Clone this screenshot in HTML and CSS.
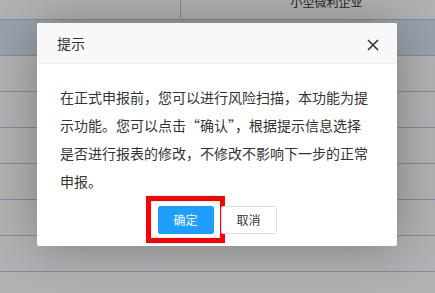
FILE: index.html
```html
<!doctype html>
<html lang="zh-CN">
<head>
    <meta charset="UTF-8">
    <title>提示</title>
    <link rel="stylesheet" href="styles.css">
</head>
<body>
    <div class="table">
        <div class="row">
            <div class="cell cell-first"></div>
            <div class="cell cell-type">小型微利企业</div>
        </div>
        <div class="row row-hover"></div>
        <div class="row"></div>
        <div class="row"></div>
        <div class="row"></div>
        <div class="row"></div>
        <div class="row"></div>
        <div class="row"></div>
    </div>

    <div class="shade"></div>

    <div class="layer">
        <div class="layer-title">
            提示
            <span class="layer-close">
                <svg width="12" height="12" viewBox="0 0 12 12">
                    <path d="M1 1 L11 11 M11 1 L1 11" stroke="#333" stroke-width="1.6" fill="none"/>
                </svg>
            </span>
        </div>
        <div class="layer-content">
            在正式申报前，您可以进行风险扫描，本功能为提示功能。您可以点击“确认”，根据提示信息选择是否进行报表的修改，不修改不影响下一步的正常申报。
        </div>
        <div class="layer-btn">
            <a class="btn btn-ok">确定<span class="mark"></span></a>
            <a class="btn btn-cancel">取消</a>
        </div>
    </div>
</body>
</html>
```

FILE: styles.css
```css
* { margin: 0; padding: 0; box-sizing: border-box; }
body {
    width: 435px;
    height: 293px;
    overflow: hidden;
    position: relative;
    background: #fff;
    font-family: "Noto Sans CJK SC", "Liberation Sans", sans-serif;
    color: #333;
}

.table { margin-top: -16px; }
.row {
    display: flex;
    height: 36px;
    border-bottom: 1px solid #b9cbe0;
}
.row-hover { background: #dce9f7; }
.cell { height: 35px; line-height: 35px; font-size: 12px; }
.cell-first { width: 181px; border-right: 1px solid #b9cbe0; }
.cell-type { flex: 1; text-align: center; padding-left: 37px; color: #333; }

.shade {
    position: absolute;
    left: 0;
    top: 0;
    width: 100%;
    height: 100%;
    background: rgba(0,0,0,0.3);
}

.layer {
    position: absolute;
    top: 23px;
    left: 37px;
    width: 360px;
    background: #fff;
    border-radius: 2px;
    box-shadow: 1px 1px 50px rgba(0,0,0,0.3);
}
.layer-title {
    position: relative;
    height: 41px;
    line-height: 41px;
    padding-left: 20px;
    font-size: 14px;
    color: #333;
    background: #f8f8f8;
    border-bottom: 1px solid #eee;
    border-radius: 2px 2px 0 0;
}
.layer-close {
    position: absolute;
    right: 18px;
    top: 16px;
    width: 12px;
    height: 12px;
    display: block;
}
.layer-close svg { display: block; }

.layer-content {
    padding: 19px 23px 0 23px;
    font-size: 14px;
    line-height: 28px;
    color: #333;
}

.layer-btn {
    display: flex;
    justify-content: center;
    gap: 7px;
    padding: 11px 0 12px 0;
}
.btn {
    position: relative;
    display: block;
    width: 56px;
    height: 28px;
    line-height: 26px;
    text-align: center;
    font-size: 12px;
    border-radius: 2px;
    border: 1px solid #dedede;
    background: #fff;
    color: #333;
}
.btn-ok {
    background: #1e9fff;
    border-color: #1e9fff;
    color: #fff;
}
.mark {
    position: absolute;
    left: -13px;
    top: -11px;
    width: 79px;
    height: 47px;
    border: 5px solid #ff0000;
}
```
